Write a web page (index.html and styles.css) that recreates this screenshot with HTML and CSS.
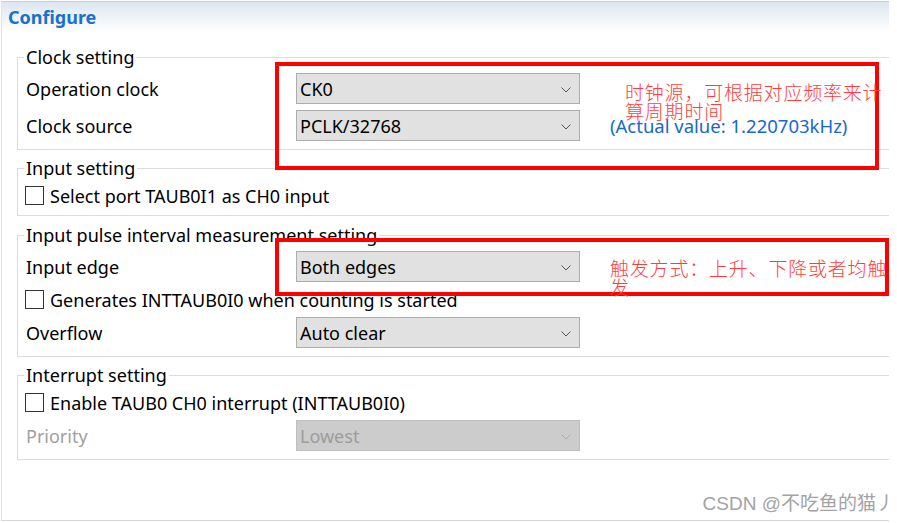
FILE: index.html
```html
<!DOCTYPE html>
<html lang="en">
<head>
    <meta charset="UTF-8">
    <title>Configure</title>
    <link rel="stylesheet" href="styles.css">
</head>
<body>
    <div class="panel">
        <div class="title">Configure</div>

        <fieldset class="group">
            <legend>Clock setting</legend>
            <div class="rows">
                <div class="row">
                    <span class="label">Operation clock</span>
                    <div class="select">CK0<svg class="chev" viewBox="0 0 10 6"><polyline points="0.5,0.5 5,5 9.5,0.5"/></svg></div>
                </div>
                <div class="row">
                    <span class="label">Clock source</span>
                    <div class="select">PCLK/32768<svg class="chev" viewBox="0 0 10 6"><polyline points="0.5,0.5 5,5 9.5,0.5"/></svg></div>
                    <span class="note">(Actual value: 1.220703kHz)</span>
                </div>
            </div>
        </fieldset>

        <fieldset class="group">
            <legend>Input setting</legend>
            <div class="rows">
                <div class="row check-row">
                    <span class="box"></span>
                    <span>Select port TAUB0I1 as CH0 input</span>
                </div>
            </div>
        </fieldset>

        <fieldset class="group group-pulse">
            <legend>Input pulse interval measurement setting</legend>
            <div class="rows">
                <div class="row">
                    <span class="label">Input edge</span>
                    <div class="select">Both edges<svg class="chev" viewBox="0 0 10 6"><polyline points="0.5,0.5 5,5 9.5,0.5"/></svg></div>
                </div>
                <div class="row check-row">
                    <span class="box"></span>
                    <span>Generates INTTAUB0I0 when counting is started</span>
                </div>
                <div class="row">
                    <span class="label">Overflow</span>
                    <div class="select">Auto clear<svg class="chev" viewBox="0 0 10 6"><polyline points="0.5,0.5 5,5 9.5,0.5"/></svg></div>
                </div>
            </div>
        </fieldset>

        <fieldset class="group">
            <legend>Interrupt setting</legend>
            <div class="rows">
                <div class="row check-row">
                    <span class="box"></span>
                    <span>Enable TAUB0 CH0 interrupt (INTTAUB0I0)</span>
                </div>
                <div class="row disabled">
                    <span class="label">Priority</span>
                    <div class="select">Lowest<svg class="chev" viewBox="0 0 10 6"><polyline points="0.5,0.5 5,5 9.5,0.5"/></svg></div>
                </div>
            </div>
        </fieldset>

        <!-- red annotations drawn over the dialog -->
        <div class="mark mark-clock"></div>
        <div class="memo memo-clock">时钟源，可根据对应频率来计<br>算周期时间</div>
        <div class="mark mark-edge"></div>
        <div class="memo memo-edge">触发方式：上升、下降或者均触<br>发</div>

        <div class="watermark">CSDN @不吃鱼的猫丿</div>
    </div>
</body>
</html>
```

FILE: styles.css
```css
:root {
    --line: #dcdcdc;
    --ui-font: "Noto Sans", "Noto Sans CJK SC", sans-serif;
    --red: #ff0000;
}
body { margin: 0; background: #fff; font-family: var(--ui-font); font-size: 18px; color: #000; }
.panel { position: relative; margin: 1px 0 0 1px; width: 888px; height: 520px; border-top: 1px solid #c9ced4; border-left: 1px solid #e4e4e4; border-bottom: 1px solid #d6d6d6; box-sizing: border-box; }
.title { height: 30px; padding-left: 6px; background: linear-gradient(to bottom, #dde6f0, #ffffff); color: #1872c9; font-weight: bold; font-size: 18px; line-height: 30px; }
.group { margin: 7px 0 0 15px; padding: 5px 0 8px 8px; border: 1px solid var(--line); border-right: none; }
.group:first-of-type { margin-top: 14px; }
.group-pulse { margin-top: 8px; }
.group legend { padding: 0 2px; margin-left: -2px; line-height: 22px; }
.rows { display: flex; flex-direction: column; gap: 6px; }
.row { display: flex; align-items: center; height: 31px; }
.check-row { height: 23px; }
.label { width: 270px; flex: none; }
.select { position: relative; width: 284px; height: 31px; box-sizing: border-box; padding-left: 3px; border: 1px solid #adadad; background: #e1e1e1; display: flex; align-items: center; flex: none; }
.chev { position: absolute; right: 8px; top: 13px; width: 10px; height: 6px; fill: none; stroke: #555; stroke-width: 1; }
.note { margin-left: 30px; color: #1668cf; white-space: nowrap; font-size: 18.5px; }
.box { width: 19px; height: 19px; box-sizing: border-box; border: 1px solid #333; background: #fff; margin: 0 6px 0 -1px; flex: none; }
.disabled .label { color: #a0a0a0; }
.disabled .select { background: #cccccc; border-color: #bfbfbf; color: #9c9c9c; }
.disabled .chev { stroke: #ababab; }
.mark { position: absolute; border: 4px solid var(--red); box-sizing: border-box; }
.mark-clock { left: 273px; top: 60px; width: 604px; height: 108px; }
.mark-edge { left: 273px; top: 236px; width: 614px; height: 58px; }
.memo { position: absolute; color: #ff3c3c; font-family: "Noto Sans CJK SC", sans-serif; font-weight: 300; font-size: 19px; letter-spacing: 0.8px; line-height: 19px; white-space: nowrap; }
.memo-clock { left: 623px; top: 80px; }
.memo-edge { left: 608px; top: 256px; }
.watermark { position: absolute; right: -6px; bottom: 5px; color: #a3a3a3; font-size: 19px; font-family: "Liberation Sans", "Noto Sans CJK SC", sans-serif; }
```
